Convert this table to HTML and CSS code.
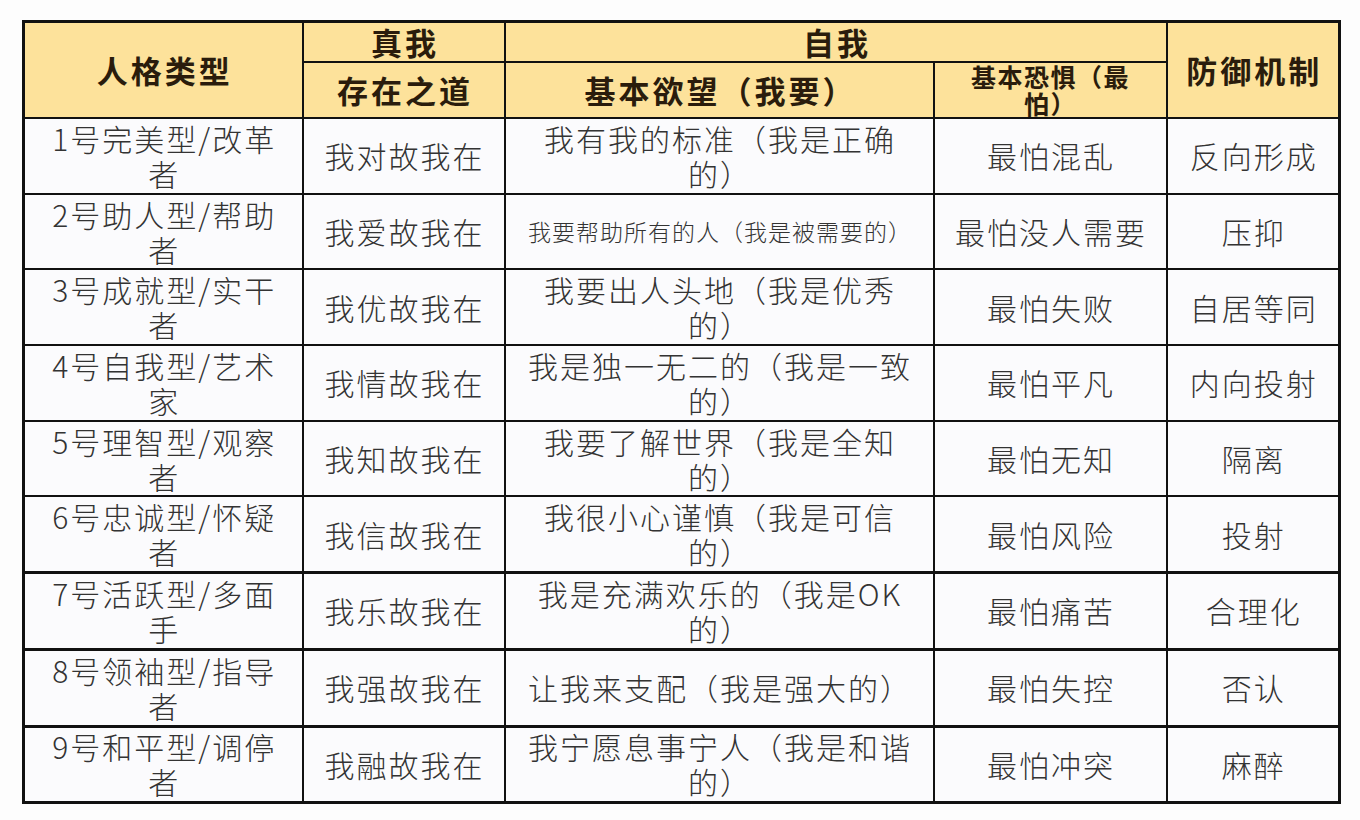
FILE: index.html
```html
<!DOCTYPE html>
<html lang="zh-CN">
<head>
<meta charset="utf-8">
<title>九型人格</title>
<link rel="stylesheet" href="styles.css">
</head>
<body>
<div class="page">
<table class="grid">
  <colgroup>
    <col class="c1"><col class="c2"><col class="c3"><col class="c4"><col class="c5">
  </colgroup>
  <thead>
    <tr class="h1">
      <th rowspan="2">人格类型</th>
      <th>真我</th>
      <th colspan="2">自我</th>
      <th rowspan="2">防御机制</th>
    </tr>
    <tr class="h2">
      <th>存在之道</th>
      <th>基本欲望（我要）</th>
      <th class="small">基本恐惧（最<br>怕）</th>
    </tr>
  </thead>
  <tbody>
    <tr><td>1号完美型/改革<br>者</td><td>我对故我在</td><td>我有我的标准（我是正确<br>的）</td><td>最怕混乱</td><td>反向形成</td></tr>
    <tr><td>2号助人型/帮助<br>者</td><td>我爱故我在</td><td class="tiny">我要帮助所有的人（我是被需要的）</td><td>最怕没人需要</td><td>压抑</td></tr>
    <tr><td>3号成就型/实干<br>者</td><td>我优故我在</td><td>我要出人头地（我是优秀<br>的）</td><td>最怕失败</td><td>自居等同</td></tr>
    <tr><td>4号自我型/艺术<br>家</td><td>我情故我在</td><td>我是独一无二的（我是一致<br>的）</td><td>最怕平凡</td><td>内向投射</td></tr>
    <tr><td>5号理智型/观察<br>者</td><td>我知故我在</td><td>我要了解世界（我是全知<br>的）</td><td>最怕无知</td><td>隔离</td></tr>
    <tr><td>6号忠诚型/怀疑<br>者</td><td>我信故我在</td><td>我很小心谨慎（我是可信<br>的）</td><td>最怕风险</td><td>投射</td></tr>
    <tr class="thick"><td>7号活跃型/多面<br>手</td><td>我乐故我在</td><td>我是充满欢乐的（我是OK<br>的）</td><td>最怕痛苦</td><td>合理化</td></tr>
    <tr class="thick"><td>8号领袖型/指导<br>者</td><td>我强故我在</td><td>让我来支配（我是强大的）</td><td>最怕失控</td><td>否认</td></tr>
    <tr class="thick"><td>9号和平型/调停<br>者</td><td>我融故我在</td><td>我宁愿息事宁人（我是和谐<br>的）</td><td>最怕冲突</td><td>麻醉</td></tr>
  </tbody>
</table>
</div>
</body>
</html>
```
FILE: styles.css
```css
html, body {
  margin: 0;
  padding: 0;
  background: #fdfdfd;
}
.page {
  padding: 20px 0 0 22px;
}
.grid {
  border-collapse: collapse;
  width: 1316px;
  table-layout: fixed;
  font-family: "Noto Sans CJK SC", "Noto Sans", sans-serif;
  border: 3px solid #111;
}
.c1 { width: 279px; }
.c2 { width: 202px; }
.c3 { width: 429px; }
.c4 { width: 233px; }
.c5 { width: 173px; }
.grid th, .grid td {
  border: 2px solid #111;
  text-align: center;
  vertical-align: middle;
}
.grid th {
  background: #fde29b;
  color: #2a1c0c;
  font-weight: 700;
  font-size: 31px;
  line-height: 36px;
  letter-spacing: 3px;
  padding: 0 0 0 3px;
}
.h1 th { height: 38px; }
.h2 th { height: 54px; }
.grid th.small {
  font-size: 25px;
  line-height: 27px;
  letter-spacing: 1.5px;
  padding-left: 1px;
}
.grid td {
  background: #fbfbfd;
  color: #333;
  font-weight: 300;
  font-size: 30px;
  line-height: 35px;
  letter-spacing: 2px;
  padding: 0 0 0 2px;
  height: 73.7px;
}
.grid td.tiny {
  font-size: 23px;
  letter-spacing: 1px;
}
.thick td {
  border-top-width: 3px;
}
```
